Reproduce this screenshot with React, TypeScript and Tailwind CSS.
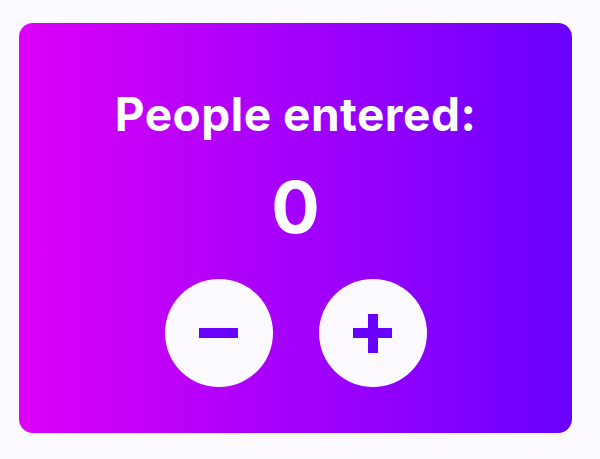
import { useState } from 'react'

export default function App() {
  const [count, setCount] = useState(0)

  return (
    <div className="min-h-[459px] w-[600px] bg-[#fcfaff] pl-[19px] pt-[23px] font-['Inter',sans-serif]">
      <div className="flex h-[410px] w-[553px] flex-col items-center rounded-[14px] bg-[linear-gradient(to_right,#dd00f7,#6a00ff)] pt-[64px] text-white">
        <h1 className="text-[46px] font-bold leading-[54px] tracking-[0.5px]">People entered:</h1>
        <p className="mt-[22px] text-[72px] font-bold leading-[87px]">{count}</p>
        <div className="mt-[29px] flex gap-[46px]">
          <button
            type="button"
            aria-label="Decrease"
            onClick={() => setCount((c) => Math.max(c - 1, 0))}
            className="flex h-[108px] w-[108px] items-center justify-center rounded-full bg-[#fcfaff]"
          >
            <span className="block h-[10px] w-[39px] bg-[#6a00ff]" />
          </button>
          <button
            type="button"
            aria-label="Increase"
            onClick={() => setCount((c) => c + 1)}
            className="relative flex h-[108px] w-[108px] items-center justify-center rounded-full bg-[#fcfaff]"
          >
            <span className="absolute h-[10px] w-[39px] bg-[#6a00ff]" />
            <span className="absolute h-[39px] w-[10px] bg-[#6a00ff]" />
          </button>
        </div>
      </div>
    </div>
  )
}
